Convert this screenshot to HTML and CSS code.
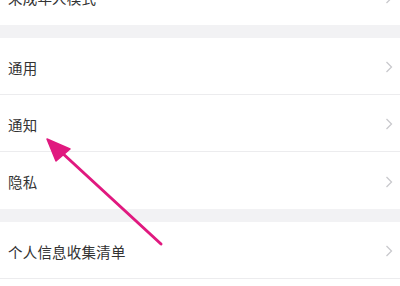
FILE: index.html
```html
<!DOCTYPE html>
<html lang="zh">
<head>
<meta charset="utf-8">
<link rel="stylesheet" href="styles.css">
</head>
<body>
<div class="page">
  <div class="list">
    <div class="group">
      <div class="row"><span class="label">未成年人模式</span><svg class="chev" width="8" height="12" viewBox="0 0 8 12"><polyline points="1.5,1 6.5,6 1.5,11" /></svg></div>
    </div>
    <div class="band"></div>
    <div class="group">
      <div class="row"><span class="label">通用</span><svg class="chev" width="8" height="12" viewBox="0 0 8 12"><polyline points="1.5,1 6.5,6 1.5,11" /></svg></div>
      <div class="row"><span class="label">通知</span><svg class="chev" width="8" height="12" viewBox="0 0 8 12"><polyline points="1.5,1 6.5,6 1.5,11" /></svg></div>
      <div class="row"><span class="label">隐私</span><svg class="chev" width="8" height="12" viewBox="0 0 8 12"><polyline points="1.5,1 6.5,6 1.5,11" /></svg></div>
    </div>
    <div class="band"></div>
    <div class="group">
      <div class="row"><span class="label">个人信息收集清单</span><svg class="chev" width="8" height="12" viewBox="0 0 8 12"><polyline points="1.5,1 6.5,6 1.5,11" /></svg></div>
      <div class="row"><span class="label"></span></div>
    </div>
  </div>
  <svg class="arrow" width="400" height="286" viewBox="0 0 400 286">
    <line x1="161" y1="244" x2="60" y2="151" />
    <polygon points="47,139 56,161 70,149" />
  </svg>
</div>
</body>
</html>
```
FILE: styles.css
```css
html, body {
  margin: 0;
  padding: 0;
  background: #ffffff;
}
.page {
  position: relative;
  width: 400px;
  height: 286px;
  overflow: hidden;
  font-family: "Noto Sans CJK SC", "Noto Sans", sans-serif;
}
.list {
  margin-top: -32px;
  display: flex;
  flex-direction: column;
}
.group {
  display: flex;
  flex-direction: column;
  background: #ffffff;
}
.row {
  box-sizing: border-box;
  height: 57px;
  display: flex;
  align-items: center;
  justify-content: space-between;
  padding: 2px 7px 0 8px;
  border-bottom: 1px solid #ececee;
}
.row:last-child {
  border-bottom: none;
}
.label {
  font-size: 14.5px;
  color: #333333;
  letter-spacing: 0.2px;
}
.chev polyline {
  fill: none;
  stroke: #c9c9cd;
  stroke-width: 1.3;
}
.band {
  height: 13px;
  background: #f2f2f4;
}
.arrow {
  position: absolute;
  left: 0;
  top: 0;
  pointer-events: none;
}
.arrow line {
  stroke: #e0197f;
  stroke-width: 3;
  stroke-linecap: round;
}
.arrow polygon {
  fill: #e0197f;
  stroke: #e0197f;
  stroke-width: 1.5;
  stroke-linejoin: round;
}
```
